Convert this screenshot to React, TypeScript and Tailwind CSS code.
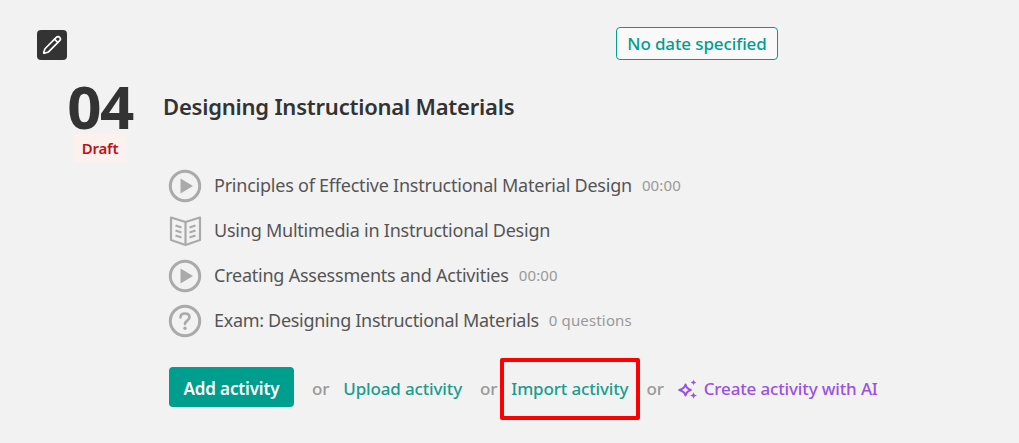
import { Pencil } from 'lucide-react';

const FONT = "font-['Noto_Sans',sans-serif]";

function PlayIcon() {
  return (
    <svg width="34" height="34" viewBox="0 0 34 34" fill="none">
      <circle cx="17" cy="17" r="14.7" stroke="#aaaaaa" strokeWidth="3" />
      <path d="M12.5 9.5 L25 17 L12.5 24.5 Z" fill="#aaaaaa" />
    </svg>
  );
}

function BookIcon() {
  return (
    <svg width="34" height="34" viewBox="0 0 34 34" fill="none" stroke="#aaaaaa" strokeWidth="2.2" strokeLinejoin="round">
      <path d="M3 3.5 L17.5 8 L32 3.5 V26 L17.5 31 L3 26 Z" />
      <path d="M17.5 8 V31" />
      <path d="M7.5 11.5 L13.5 13.5 M7.5 16.5 L13.5 18.5 M7.5 21.5 L13.5 23.5 M27.5 11.5 L21.5 13.5 M27.5 16.5 L21.5 18.5 M27.5 21.5 L21.5 23.5" />
    </svg>
  );
}

function QuestionIcon() {
  return (
    <svg width="34" height="34" viewBox="0 0 34 34" fill="none">
      <circle cx="17" cy="17" r="14.7" stroke="#aaaaaa" strokeWidth="3" />
      <path d="M12.5 13.5 C12.5 10.8 14.5 9.5 17 9.5 C19.6 9.5 21.5 11 21.5 13.3 C21.5 16.5 17 16.8 17 20" stroke="#aaaaaa" strokeWidth="2.6" strokeLinecap="round" />
      <circle cx="17" cy="24.3" r="1.7" fill="#aaaaaa" />
    </svg>
  );
}

function SparkleIcon() {
  return (
    <svg width="21" height="21" viewBox="0 0 21 21" fill="none">
      <path d="M7.5 5.5 C8.3 8.7 9.6 10 12.8 11 C9.6 12 8.3 13.3 7.5 16.5 C6.7 13.3 5.4 12 1.2 11 C5.4 10 6.7 8.7 7.5 5.5 Z" stroke="#9b51e0" strokeWidth="2" strokeLinejoin="round" />
      <path d="M15.5 0.5 C15.9 2.4 16.5 3 18.4 3.5 C16.5 4 15.9 4.6 15.5 6.5 C15.1 4.6 14.5 4 12.6 3.5 C14.5 3 15.1 2.4 15.5 0.5 Z" fill="#9b51e0" />
      <path d="M15.5 13 C16 15.3 16.7 16 19 16.5 C16.7 17 16 17.7 15.5 20 C15 17.7 14.3 17 12 16.5 C14.3 16 15 15.3 15.5 13 Z" fill="#9b51e0" />
    </svg>
  );
}

const ACTIVITIES = [
  { icon: <PlayIcon />, title: 'Principles of Effective Instructional Material Design', meta: '00:00', spacing: 'tracking-[-0.23px]' },
  { icon: <BookIcon />, title: 'Using Multimedia in Instructional Design', meta: '', spacing: 'tracking-[-0.23px]' },
  { icon: <PlayIcon />, title: 'Creating Assessments and Activities', meta: '00:00', spacing: 'tracking-[-0.23px]' },
  { icon: <QuestionIcon />, title: 'Exam: Designing Instructional Materials', meta: '0 questions', spacing: 'tracking-[-0.31px]' },
];

export default function App() {
  return (
    <main className={`${FONT} min-h-screen bg-[#f2f2f2] pl-[37px] pt-[27px] text-[#333333]`}>
      {/* Header */}
      <div className="flex items-start">
        <button className="mt-[3px] flex h-[30px] w-[30px] items-center justify-center rounded-[4px] bg-[#333333] text-white">
          <Pencil className="h-[20px] w-[20px]" strokeWidth={2} />
        </button>
        <span className="ml-[549px] flex h-[33px] w-[162px] items-center justify-center rounded-[4px] border border-[#009e8e] bg-[#f9f9f9] text-[17px] font-medium tracking-[-0.12px] text-[#009e8e]">
          No date specified
        </span>
      </div>

      <div className="ml-[23px] mt-[14px] flex items-start">
        <div className="flex w-[80px] flex-col items-center pt-[7px]">
          <span className="h-[50px] text-[60px] leading-[50px] font-bold tracking-[-1.5px]">04</span>
          <span className="mt-[3px] flex h-[28px] w-[52px] items-center justify-center bg-[#fdf1f0] text-[15px] font-semibold tracking-[-0.2px] text-[#b91414]">
            Draft
          </span>
        </div>
        <h1 className="ml-[23px] mt-[16px] text-[22px] leading-[32px] font-semibold tracking-[-0.22px]">
          Designing Instructional Materials
        </h1>
      </div>

      {/* Activities */}
      <ul className="ml-[131px] mt-[1px] flex flex-col">
        {ACTIVITIES.map((a) => (
          <li key={a.title} className="flex h-[45px] items-center">
            <span className="flex w-[34px] justify-center">{a.icon}</span>
            <span className={`ml-[12px] text-[18px] text-[#555555] ${a.spacing}`}>{a.title}</span>
            {a.meta && <span className="ml-[10px] text-[15px] tracking-[0.15px] text-[#999999]">{a.meta}</span>}
          </li>
        ))}
      </ul>

      {/* Actions */}
      <div className="ml-[132px] mt-[24px] flex h-[40px] items-center text-[17px] font-medium tracking-[-0.15px]">
        <button className="flex h-[40px] w-[125px] items-center justify-center rounded-[4px] bg-[#009e8e] pt-[4px] font-semibold text-white">
          Add activity
        </button>
        <span className="ml-[18px] mt-[4px] text-[#999999]">or</span>
        <span className="ml-[14px] mt-[4px] text-[#1a9c8e]">Upload activity</span>
        <span className="ml-[18px] mt-[4px] text-[#999999]">or</span>
        <span className="relative ml-[14px] mt-[4px] text-[#1a9c8e]">
          Import activity
          <span className="absolute -bottom-[18px] -left-[11px] -right-[12px] -top-[18px] rounded-[2px] border-[4px] border-[#ff0000]" />
        </span>
        <span className="ml-[18px] mt-[4px] text-[#999999]">or</span>
        <span className="ml-[14px] mt-[4px] flex items-center gap-[5px] text-[#9b51e0]">
          <SparkleIcon />
          Create activity with AI
        </span>
      </div>
    </main>
  );
}
